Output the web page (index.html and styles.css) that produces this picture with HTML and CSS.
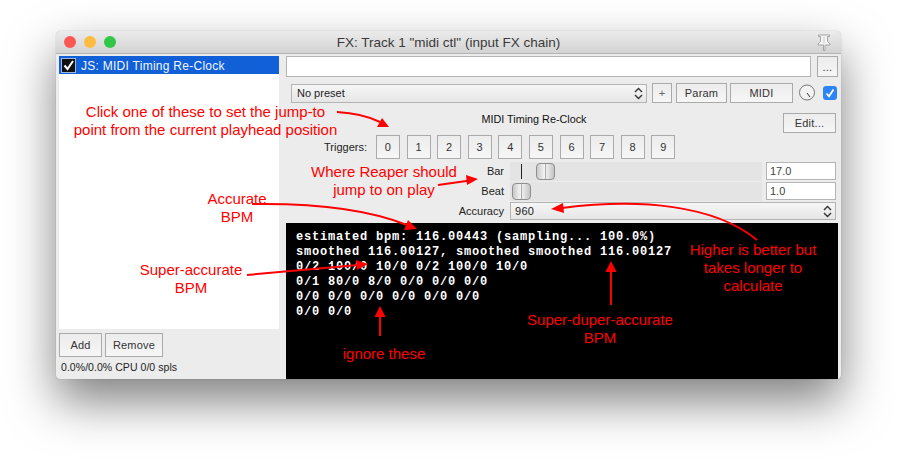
FILE: index.html
```html
<!DOCTYPE html>
<html lang="en">
  <head>
    <meta charset="UTF-8" />
    <title>FX: Track 1</title>
    <link rel="stylesheet" href="styles.css">
  </head>
  <body>
    <div class="window">
      <div class="titlebar">
        <span class="light red"></span>
        <span class="light yellow"></span>
        <span class="light green"></span>
        <span class="title">FX: Track 1 "midi ctl" (input FX chain)</span>
        <svg class="pin" width="16" height="17" viewBox="0 0 16 17">
          <path d="M2.500 1H13.500V2.500H11.500V7.500L14 10V11H9V16.500H7.500V11H2V10L4.500 7.500V2.500H2.500Z" fill="#f6f6f6" stroke="#a4a4a4" stroke-width="1"/>
          <path d="M8 2.500V9.500" stroke="#c4c4c4" stroke-width="1"/>
        </svg>
      </div>
      <div class="content">
        <div class="left">
          <div class="list">
            <div class="list-row">
              <span class="list-check">
                <svg width="13" height="13" viewBox="0 0 13 13"><path d="M2.500 6.500l3 3.500L11 2" fill="none" stroke="#fff" stroke-width="2"/></svg>
              </span>
              JS: MIDI Timing Re-Clock
            </div>
          </div>
          <div class="left-buttons">
            <button class="btn add">Add</button>
            <button class="btn remove">Remove</button>
          </div>
          <div class="status">0.0%/0.0% CPU 0/0 spls</div>
        </div>
        <div class="right">
          <div class="row-top">
            <div class="text-input wide"></div>
            <button class="btn dots">...</button>
          </div>
          <div class="row-preset">
            <div class="select preset">No preset
              <svg class="updown" width="9" height="13" viewBox="0 0 9 13"><path d="M1 5l3.500-3.500L8 5M1 8l3.500 3.500L8 8" fill="none" stroke="#333" stroke-width="1.400"/></svg>
            </div>
            <button class="btn plus">+</button>
            <button class="btn param">Param</button>
            <button class="btn midi">MIDI</button>
            <svg class="knob" width="18" height="18" viewBox="0 0 18 18">
              <circle cx="9" cy="9.500" r="7.500" fill="#e2e2e2"/>
              <circle cx="9" cy="8.500" r="7.500" fill="#f3f3f3" stroke="#777"/>
              <path d="M9 9l3 4" stroke="#333" stroke-width="1"/>
            </svg>
            <span class="bypass">
              <svg width="14" height="14" viewBox="0 0 14 14"><path d="M3.500 7.500l2.500 2.800L10.500 3.500" fill="none" stroke="#fff" stroke-width="1.800"/></svg>
            </span>
          </div>
          <div class="row-title">
            <span class="plugin-name">MIDI Timing Re-Clock</span>
            <button class="btn edit">Edit...</button>
          </div>
          <div class="row-triggers">
            <span class="triggers-label">Triggers:</span>
            <button class="btn trig">0</button>
            <button class="btn trig">1</button>
            <button class="btn trig">2</button>
            <button class="btn trig">3</button>
            <button class="btn trig">4</button>
            <button class="btn trig">5</button>
            <button class="btn trig">6</button>
            <button class="btn trig">7</button>
            <button class="btn trig">8</button>
            <button class="btn trig">9</button>
          </div>
          <div class="params">
            <div class="row-param">
              <span class="param-label">Bar</span>
              <div class="slider">
                <span class="tick"></span>
                <span class="handle"></span>
              </div>
              <div class="text-input value">17.0</div>
            </div>
            <div class="row-param">
              <span class="param-label">Beat</span>
              <div class="slider">
                <span class="handle"></span>
              </div>
              <div class="text-input value">1.0</div>
            </div>
            <div class="row-param">
              <span class="param-label">Accuracy</span>
              <div class="select accuracy">960
                <svg class="updown" width="9" height="13" viewBox="0 0 9 13"><path d="M1 5l3.500-3.500L8 5M1 8l3.500 3.500L8 8" fill="none" stroke="#333" stroke-width="1.400"/></svg>
              </div>
            </div>
          </div>
          <pre class="console">estimated bpm: 116.00443 (sampling... 100.0%)
smoothed 116.00127, smoothed smoothed 116.00127
0/2 100/0 10/0 0/2 100/0 10/0
0/1 80/0 8/0 0/0 0/0 0/0
0/0 0/0 0/0 0/0 0/0 0/0
0/0 0/0</pre>
        </div>
      </div>
    </div>

    <!-- annotations drawn on top of the screenshot -->
    <svg class="arrows" width="897" height="460" viewBox="0 0 897 460">
      <g fill="none" stroke="#f00" stroke-width="2">
        <path d="M337 112C355 113 368 116 380 122"/>
        <path d="M438 185L470 180.500"/>
        <path d="M252 204C320 203 370 210 407 225"/>
        <path d="M247 275L358 265"/>
        <path d="M380 336V316"/>
        <path d="M611 305V272"/>
        <path d="M757 240C715 205 640 198 562 208"/>
      </g>
      <g fill="#f00">
        <path d="M389 127L377 127L382 118Z"/>
        <path d="M478 179L467 185L466 175Z"/>
        <path d="M417 229L404 230L408 220Z"/>
        <path d="M368 264L357 270L356 260Z"/>
        <path d="M380 306L385.500 317H374.500Z"/>
        <path d="M611 261L616.500 272H605.500Z"/>
        <path d="M551 209L563 203L564 213Z"/>
      </g>
    </svg>
    <div class="note note-click">Click one of these to set the jump-to<br>point from the current playhead position</div>
    <div class="note note-reaper">Where Reaper should<br>jump to on play</div>
    <div class="note note-accurate">Accurate<br>BPM</div>
    <div class="note note-super">Super-accurate<br>BPM</div>
    <div class="note note-ignore">ignore these</div>
    <div class="note note-duper">Super-duper-accurate<br>BPM</div>
    <div class="note note-higher">Higher is better but<br>takes longer to<br>calculate</div>
  </body>
</html>
```

FILE: styles.css
```css
* {
  box-sizing: border-box;
}
html,
body {
  margin: 0;
  height: 460px;
  overflow: hidden;
  background: #fff;
}
body {
  padding: 31px 0 0 56px;
  font-family: "Liberation Sans", Arial, sans-serif;
  font-size: 11px;
  color: #222;
}
.window {
  width: 785px;
  height: 348px;
  background: #ececec;
  border-radius: 5px 5px 4px 4px;
  box-shadow: 0 22px 48px rgba(0, 0, 0, 0.5), 0 0 1px rgba(0, 0, 0, 0.4);
  overflow: hidden;
}
.titlebar {
  position: relative;
  display: flex;
  align-items: center;
  gap: 8px;
  height: 23px;
  padding-left: 8px;
  background: linear-gradient(#ebebeb, #d3d3d3);
  border-bottom: 1px solid #b4b4b4;
}
.light {
  width: 12px;
  height: 12px;
  border-radius: 50%;
}
.red {
  background: #fc5753;
}
.yellow {
  background: #fdbc40;
}
.green {
  background: #33c748;
}
.title {
  position: absolute;
  left: 0;
  right: 0;
  text-align: center;
  font-size: 13.500px;
  color: #3a3a3a;
}
.pin {
  position: absolute;
  right: 9px;
  top: 3px;
}
.content {
  display: flex;
  height: 325px;
}
.left {
  width: 230px;
  padding: 2px 0 0 3px;
}
.list {
  width: 220px;
  height: 273px;
  background: #fff;
}
.list-row {
  display: flex;
  align-items: center;
  gap: 5px;
  height: 18px;
  padding: 1px 0 0 2px;
  background: #1160d8;
  color: #f2f6ff;
  font-size: 12px;
  letter-spacing: 0.27px;
}
.list-check {
  display: flex;
  align-items: center;
  justify-content: center;
  width: 15px;
  height: 15px;
  background: #111;
  border: 1px solid #9db8e0;
}
.left-buttons {
  display: flex;
  gap: 3px;
  margin-top: 4px;
}
.btn {
  padding: 0;
  font-family: inherit;
  font-size: 11px;
  color: #333;
  background: linear-gradient(#ececec, #f6f6f6);
  border: 1px solid #aaa;
  letter-spacing: 0.2px;
}
.add {
  width: 43px;
  height: 24px;
}
.remove {
  width: 58px;
  height: 24px;
}
.status {
  margin: 4px 0 0 2px;
  font-size: 10.500px;
  letter-spacing: 0.05px;
}
.right {
  width: 552px;
}
.row-top {
  display: flex;
  gap: 6px;
  padding-top: 2px;
}
.text-input {
  background: #fff;
  border: 1px solid #b4b4b4;
}
.wide {
  width: 525px;
  height: 21px;
}
.dots {
  width: 21px;
  height: 21px;
}
.row-preset {
  display: flex;
  align-items: center;
  height: 20px;
  margin-top: 6px;
  padding-left: 5px;
}
.select {
  position: relative;
  display: flex;
  align-items: center;
  padding-left: 5px;
  background: linear-gradient(#f6f6f6, #e6e6e6);
  border: 1px solid #b4b4b4;
}
.preset {
  width: 356px;
  height: 19px;
}
.updown {
  position: absolute;
  right: 3px;
  top: 2px;
}
.plus {
  width: 20px;
  height: 20px;
  margin-left: 5px;
  color: #666;
}
.param {
  width: 51px;
  height: 20px;
  margin-left: 4px;
}
.midi {
  width: 63px;
  height: 20px;
  margin-left: 3px;
}
.knob {
  margin-left: 5px;
}
.bypass {
  display: flex;
  width: 14px;
  height: 14px;
  margin-left: 7px;
  background: #2d84f7;
  border-radius: 3px;
}
.row-title {
  display: flex;
  align-items: center;
  height: 20px;
  margin-top: 10px;
}
.plugin-name {
  width: 496px;
  text-align: center;
  font-size: 10.800px;
  color: #111;
  margin-bottom: 8px;
}
.edit {
  width: 53px;
  height: 20px;
  margin-left: 1px;
}
.row-triggers {
  display: flex;
  align-items: center;
  gap: 6.600px;
  height: 24px;
  margin-top: 2px;
}
.triggers-label {
  width: 83px;
  text-align: right;
  margin-right: 0.400px;
  padding-right: 2px;
}
.trig {
  width: 24px;
  height: 24px;
  font-size: 11px;
}
.params {
  display: flex;
  flex-direction: column;
  gap: 2px;
  margin-top: 3px;
}
.row-param {
  display: flex;
  align-items: center;
  height: 18px;
}
.param-label {
  width: 218px;
  margin-right: 6px;
  text-align: right;
  color: #222;
}
.slider {
  position: relative;
  width: 252px;
  height: 19px;
  background: #e4e4e4;
  margin-right: 4px;
}
.tick {
  position: absolute;
  left: 11px;
  top: 2px;
  width: 1px;
  height: 15px;
  background: #222;
}
.handle {
  position: absolute;
  top: 1px;
  left: 2px;
  width: 19px;
  height: 17px;
  background: linear-gradient(90deg, #c9c9c9, #f4f4f4 45%, #888 48%, #eee 54%, #c4c4c4);
  border: 1px solid #8f8f8f;
  border-radius: 4px;
}
.tick + .handle {
  left: 26px;
}
.value {
  display: flex;
  align-items: center;
  width: 70px;
  height: 18px;
  padding-left: 3px;
  color: #444;
}
.accuracy {
  width: 326px;
  height: 18px;
  padding-left: 4px;
  letter-spacing: 0.3px;
}
.console {
  height: 156px;
  margin: 3px 0 0;
  padding: 7px 0 0 10px;
  background: #000;
  color: #fff;
  font-family: "Liberation Mono", monospace;
  font-size: 12px;
  font-weight: bold;
  line-height: 15px;
  letter-spacing: 0.800px;
}
.arrows {
  position: absolute;
  left: 0;
  top: 0;
}
.note {
  position: absolute;
  transform: translateX(-50%);
  white-space: nowrap;
  text-align: center;
  font-size: 15px;
  line-height: 18px;
  color: #f00;
}
.note-click {
  left: 205.500px;
  top: 103px;
}
.note-reaper {
  left: 384px;
  top: 163px;
}
.note-accurate {
  left: 237px;
  top: 190px;
}
.note-super {
  left: 191px;
  top: 261px;
}
.note-ignore {
  left: 384px;
  top: 345px;
}
.note-duper {
  left: 600px;
  top: 311px;
}
.note-higher {
  left: 753px;
  top: 241px;
}
```
